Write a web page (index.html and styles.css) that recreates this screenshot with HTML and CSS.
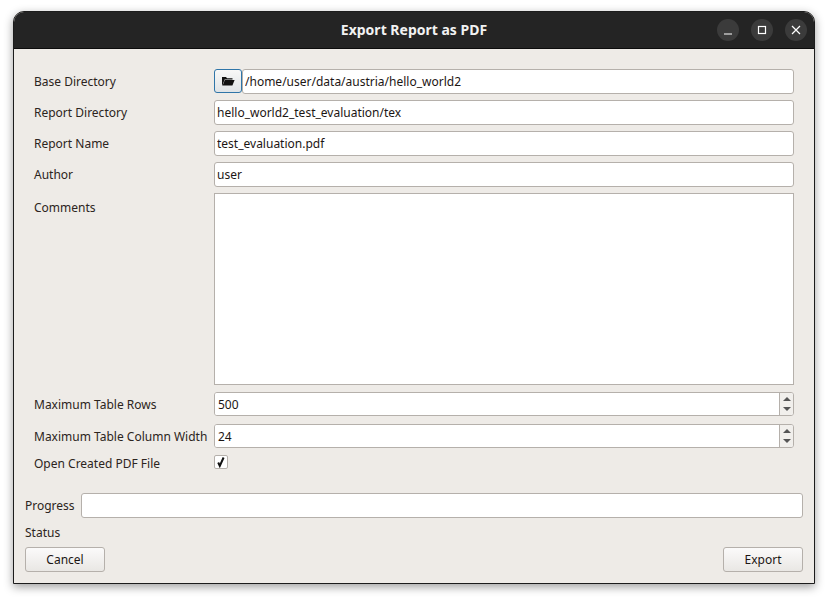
FILE: index.html
```html
<!DOCTYPE html>
<html lang="en">
<head>
<meta charset="utf-8">
<title>Export Report as PDF</title>
<link rel="stylesheet" href="styles.css">
</head>
<body>
<div class="window">
  <header class="titlebar">
    <h1 class="title">Export Report as PDF</h1>
    <div class="controls">
      <button class="ctl"><svg width="16" height="16" viewBox="0 0 16 16"><path d="M4 12h8" stroke="#fff" stroke-width="1.2" fill="none"/></svg></button>
      <button class="ctl"><svg width="16" height="16" viewBox="0 0 16 16"><rect x="4.5" y="4.5" width="7" height="7" stroke="#fff" stroke-width="1.2" fill="none"/></svg></button>
      <button class="ctl"><svg width="16" height="16" viewBox="0 0 16 16"><path d="M4 4l8 8M12 4l-8 8" stroke="#fff" stroke-width="1.2" fill="none"/></svg></button>
    </div>
  </header>
  <main class="body">
    <section class="form">
      <label class="lbl h25">Base Directory</label>
      <div class="dirrow">
        <button class="folder"><svg width="14" height="10" viewBox="0 0 14 10"><path d="M1 9.5V1h4l1 1.2h5.5v1.3H3.6L1.4 9.5z" fill="#111"/><path d="M3.8 4H13.6l-2.2 5.6H1.6z" fill="#111"/></svg></button>
        <input class="input grow" value="/home/user/data/austria/hello_world2">
      </div>
      <label class="lbl h25">Report Directory</label>
      <input class="input" value="hello_world2_test_evaluation/tex">
      <label class="lbl h25">Report Name</label>
      <input class="input" value="test_evaluation.pdf">
      <label class="lbl h25">Author</label>
      <input class="input" value="user">
      <label class="lbl comments">Comments</label>
      <div class="textarea"></div>
      <label class="lbl h24">Maximum Table Rows</label>
      <div class="spin spin-first"><input class="spinval" value="500"><span class="arrows"><i class="up"></i><i class="down"></i></span></div>
      <label class="lbl h24">Maximum Table Column Width</label>
      <div class="spin spin-last"><input class="spinval" value="24"><span class="arrows"><i class="up"></i><i class="down"></i></span></div>
      <label class="lbl check-lbl">Open Created PDF File</label>
      <div class="check"><svg width="12" height="12" viewBox="0 0 12 12"><path d="M3.2 6.5l1.6 3.4L8.6 1.5" stroke="#111" stroke-width="2" fill="none"/></svg></div>
    </section>
    <section class="progress">
      <label class="lbl">Progress</label>
      <div class="bar"></div>
    </section>
    <div class="status lbl">Status</div>
    <footer class="actions">
      <button class="btn">Cancel</button>
      <button class="btn">Export</button>
    </footer>
  </main>
</div>
</body>
</html>
```
FILE: styles.css
```css
* { box-sizing: border-box; }
html, body { margin: 0; background: #fff; }
body { font-family: "Noto Sans", sans-serif; font-size: 12px; color: #2c2420; height: 600px; overflow: hidden; }
.window { margin: 11px 0 0 13px; width: 802px; height: 573px; border-radius: 11px 11px 0 0; background: #eeebe7; border: 1px solid #1c1c1c; box-shadow: 0 3px 10px rgba(0,0,0,.38); display: flex; flex-direction: column; overflow: hidden; }
.titlebar { height: 37px; flex: none; background: #242424; border-bottom: 1px solid #0c0c0c; display: flex; align-items: center; justify-content: center; position: relative; }
.title { margin: 0 0 2px; font-size: 14px; font-weight: 700; color: #f2f2f2; }
.controls { position: absolute; right: 7px; top: 7px; display: flex; gap: 12px; }
.ctl { width: 22px; height: 22px; padding: 0; border: 0; border-radius: 50%; background: #3b3b3b; display: flex; align-items: center; justify-content: center; }
.body { flex: 1; display: flex; flex-direction: column; padding: 20px 11px 11px; }
.form { display: grid; grid-template-columns: 180px 580px; padding-left: 9px; row-gap: 6px; }
.lbl { display: flex; align-items: center; white-space: nowrap; }
.h25 { height: 25px; }
.h24 { height: 24px; }
.comments { align-items: flex-start; padding-top: 6px; }
.input { height: 25px; width: 100%; border: 1px solid #b5b0ab; border-radius: 3px; background: #fff; padding: 0 2px; font: inherit; color: #1c1614; outline: 0; }
.dirrow { display: flex; height: 25px; }
.grow { flex: 1; min-width: 0; width: auto; }
.folder { width: 28px; height: 24px; padding: 0; border: 1px solid #2f75a8; border-radius: 3px; background: linear-gradient(#f8f8f7, #dfe3e6); display: flex; align-items: center; justify-content: center; }
.textarea { height: 192px; margin-bottom: 1px; background: #fff; border: 1px solid #b5b0ab; }
.spin { height: 24px; display: flex; border: 1px solid #b5b0ab; border-radius: 3px; background: #fff; overflow: hidden; }
.spin-first { margin-bottom: 2px; }
.spin-last { margin-bottom: 1px; }
.spinval { flex: 1; min-width: 0; border: 0; padding: 0 3px; font: inherit; color: #1c1614; outline: 0; background: #fff; }
.arrows { width: 14px; flex: none; border-left: 1px solid #b5b0ab; background: #f1efec; display: flex; flex-direction: column; align-items: center; justify-content: center; gap: 6px; }
.up, .down { width: 0; height: 0; border-left: 4px solid transparent; border-right: 4px solid transparent; }
.up { border-bottom: 4px solid #555; }
.down { border-top: 4px solid #555; }
.check-lbl { height: 16px; }
.check { width: 14px; height: 14px; border: 1px solid #b5b0ab; border-radius: 2px; background: #fff; display: flex; align-items: center; justify-content: center; }
.progress { margin-top: 22px; display: flex; gap: 6px; height: 25px; }
.bar { flex: 1; border: 1px solid #b5b0ab; border-radius: 3px; background: #fff; }
.status { height: 29px; }
.actions { display: flex; justify-content: space-between; }
.btn { width: 80px; height: 25px; padding: 0; border: 1px solid #b5b0ab; border-radius: 3px; background: linear-gradient(#fbfafa, #e9e7e4); font: inherit; color: #1c1614; }
```
